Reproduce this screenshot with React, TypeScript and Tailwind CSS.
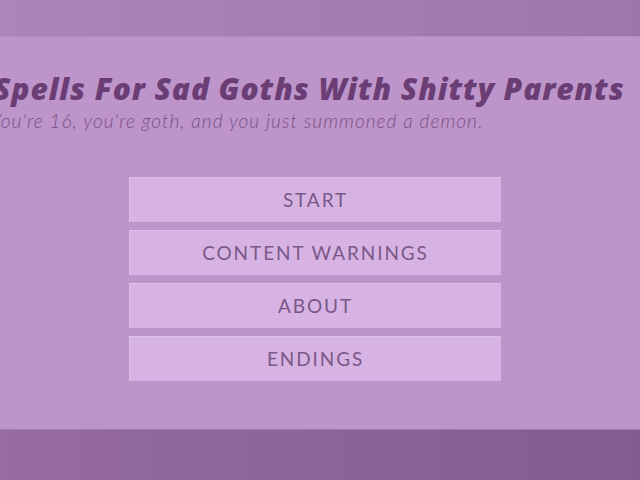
import React from "react";

export default function App() {
  const items = ["START", "CONTENT WARNINGS", "ABOUT", "ENDINGS"];
  return (
    <div className="w-[640px] h-[480px] flex flex-col overflow-hidden bg-[#bd95ca]">
      <div className="h-[37px] shrink-0 bg-gradient-to-r from-[#aa86b9] to-[#9b77ad] border-b border-[#b48cc2]" />
      <div className="flex-1 flex flex-col pt-[34px]">
        <div
          className="-ml-[6px] whitespace-nowrap text-[30px] leading-[36px] italic font-extrabold text-[#6a3e74] tracking-[0.9px]"
          style={{ fontFamily: '"Open Sans", sans-serif' }}
        >
          Spells For Sad Goths With Shitty Parents
        </div>
        <div
          className="-ml-[9px] whitespace-nowrap text-[19px] leading-[27px] italic font-light text-[#7a5087] tracking-[1.05px]"
          style={{ fontFamily: 'Lato, sans-serif' }}
        >
          You're 16, you're goth, and you just summoned a demon.
        </div>
        <div className="ml-[129px] mt-[43px] w-[372px] flex flex-col gap-[8px]">
          {items.map((t) => (
            <div
              key={t}
              className="h-[45px] flex items-center justify-center bg-[#d6b3e3] border-t border-l border-[#dcc0e8] text-[19px] tracking-[1.9px] text-[#7b5888]"
              style={{ fontFamily: 'Lato, sans-serif' }}
            >
              {t}
            </div>
          ))}
        </div>
      </div>
      <div className="h-[51px] shrink-0 bg-gradient-to-r from-[#966ca1] to-[#825c92] border-t border-[#a17aad]" />
    </div>
  );
}
